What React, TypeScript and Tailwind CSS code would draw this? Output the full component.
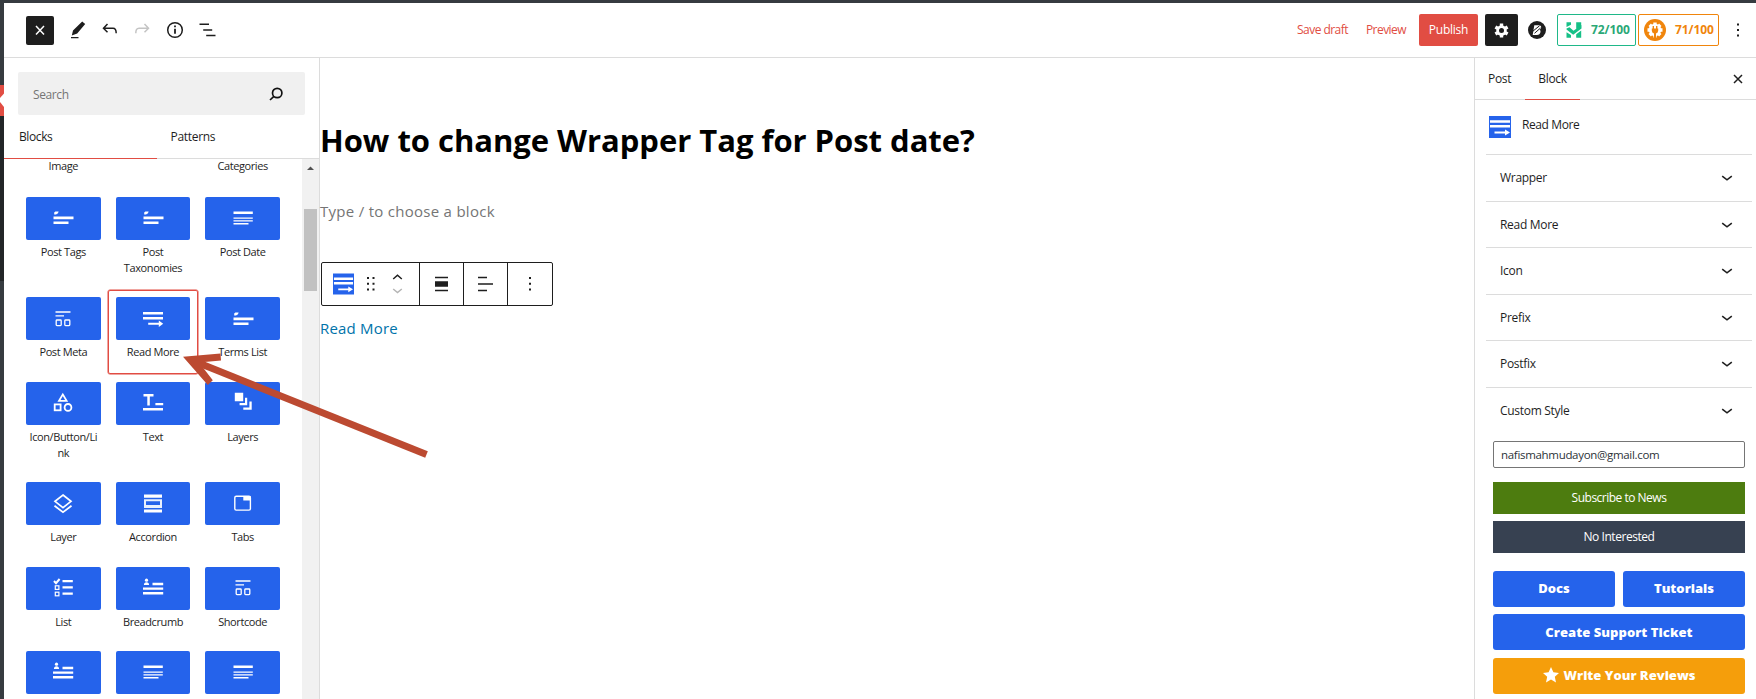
import React from "react";

type IconName =
  | "tags" | "date" | "meta" | "more" | "shapes" | "text" | "layers"
  | "layer" | "accordion" | "tabs" | "list" | "crumb";

function Glyph({ name }: { name: IconName }) {
  switch (name) {
    case "tags":
      return (<><path d="M1.2 3.6V1.400L2.400.4H5.600L5 2.200 3 3.600z" /><path d="M.5 5.600h20v2.600H.5zM.5 10.400h15V13H.5z" /></>);
    case "date":
      return <path d="M.5.6h19.300V3H.5zM.5 6.400h19.300v1.400H.5zM.5 9.200h19.300v1.400H.5zM.5 12h15v1.400H.5z" />;
    case "meta":
      return (<g fill="none" stroke="currentColor" strokeWidth="1.300"><path d="M2.500 0h15M2.500 3.800h8.500" /><rect x="3.200" y="8" width="5" height="5.600" rx=".8" /><rect x="11.800" y="8" width="5" height="5.600" rx=".8" /></g>);
    case "more":
      return (<><path d="M0 0h20v2.600H0zM0 5h20v2.600H0z" /><path d="M5.200 10.800h10.600V8.600l4.400 3.200-4.400 3.100v-2.100H5.200z" /></>);
    case "shapes":
      return (<g fill="none" stroke="currentColor" strokeWidth="1.800"><path d="M9.800-1.600 13.600 4.800H6z" /><rect x="1.700" y="8.400" width="5.900" height="5.900" /><circle cx="15" cy="11.400" r="3.400" /></g>);
    case "text":
      return <path d="M.5-2h10v2.400H6.800V9.400H4.300V.4H.5zM12.400 7h7.800v2.200h-7.800zM0 12h20v2.600H0z" />;
    case "layers":
      return <path d="M1.800-3.200h8.400v8.400H1.800zM12 1.800h2.200V9.200H6.600V7H12zM16.400 5.500h2.300v8.300h-8.400v-2.200h6.100z" />;
    case "layer":
      return (<g fill="none" stroke="currentColor" strokeWidth="1.700"><path d="M10-2 18 4.300 10 10.600 2 4.300zM1.500 8.800 10 15.300l8.500-6.500" /></g>);
    case "accordion":
      return (<><path d="M1-2.500h18V.7H1zM1 12.500h18v3H1z" /><path d="M1 2.200h18v8.800H1zM3 4.300v3.700h14V4.300z" fillRule="evenodd" opacity=".9" /></>);
    case "tabs":
      return (<><rect x="1.800" y="-.7" width="15.600" height="13.800" rx="1.400" fill="none" stroke="currentColor" strokeWidth="1.400" /><path d="M10.300-1h7.300v4.500h-7.300z" /></>);
    case "list":
      return (<><path d="M9.500-1H19.800v2.200H9.500zM9.500 5.200H19.800v2.200H9.500zM9.500 11.500H19.800v2.200H9.500z" /><g fill="none" stroke="currentColor"><path d="M1 0 3 2.200 6.600-2" strokeWidth="2" /><rect x="2.300" y="4.800" width="3.600" height="3.600" strokeWidth="1.200" /><rect x="2.300" y="11.200" width="3.600" height="3.600" strokeWidth="1.200" /></g></>);
    case "crumb":
      return (<><circle cx="3.500" cy="-.8" r="1.600" /><path d="M.9 4Q1 1.200 3.500 1.200T6.100 4zM9.500 1.800h10.700v2.400H9.500zM0 6.600h20.200v2.200H0zM0 11h20.200v2.400H0z" /></>);
  }
}

const blocks: { label: string[]; icon: IconName; active?: boolean }[] = [
  { label: ["Post Tags"], icon: "tags" },
  { label: ["Post", "Taxonomies"], icon: "tags" },
  { label: ["Post Date"], icon: "date" },
  { label: ["Post Meta"], icon: "meta" },
  { label: ["Read More"], icon: "more", active: true },
  { label: ["Terms List"], icon: "tags" },
  { label: ["Icon/Button/Li", "nk"], icon: "shapes" },
  { label: ["Text"], icon: "text" },
  { label: ["Layers"], icon: "layers" },
  { label: ["Layer"], icon: "layer" },
  { label: ["Accordion"], icon: "accordion" },
  { label: ["Tabs"], icon: "tabs" },
  { label: ["List"], icon: "list" },
  { label: ["Breadcrumb"], icon: "crumb" },
  { label: ["Shortcode"], icon: "meta" },
  { label: [], icon: "crumb" },
  { label: [], icon: "date" },
  { label: [], icon: "date" },
];

function BlockTile({ label, icon, active }: { label: string[]; icon: IconName; active?: boolean }) {
  return (
    <div className={`flex flex-col items-center rounded-[2px] border ${active ? "border-[#e14d43] ring-[0.5px] ring-[#e14d43]" : "border-transparent"} px-[6.5px] pt-[6px] pb-[12px]`}>
      <div className="flex h-[43px] w-full shrink-0 items-center justify-center rounded-[2px] bg-[#2563eb] text-white">
        <svg className="h-[14px] w-5 overflow-visible" viewBox="0 0 20 14" fill="currentColor"><Glyph name={icon} /></svg>
      </div>
      <div className="mt-[4px] min-h-[16.4px] text-center text-[11px] leading-[16.4px] tracking-[-0.4px] whitespace-nowrap text-[#1e1e1e]">
        {label.map((l) => <div key={l}>{l}</div>)}
      </div>
    </div>
  );
}

function ReadMoreIcon({ className }: { className: string }) {
  return (
    <svg className={className} viewBox="0 0 22 22">
      <path fill="#2563eb" d="M0 0h22v22H0z" />
      <path fill="#fff" d="M1 4.200h20v2.500H1zM1 9h20v2.600H1zM5.500 15.600H16V13.600l5 3-5 3v-2H5.500z" />
    </svg>
  );
}

function Chevron() {
  return (
    <svg className="h-3 w-3" viewBox="0 0 12 12" fill="none" stroke="#1e1e1e" strokeWidth="1.600"><path d="m1.200 4.200 4.800 3.600 4.800-3.600" /></svg>
  );
}

function Header() {
  return (
    <header className="flex h-[55px] shrink-0 items-center border-b border-[#dcdcdc] pl-[22px]">
      <button className="flex h-[29px] w-7 items-center justify-center rounded-[2px] bg-[#1e1e1e]">
        <svg className="h-3 w-3" viewBox="0 0 12 12" stroke="#fff" strokeWidth="1.500"><path d="m2 2 8 8.500M10 2l-8 8.500" /></svg>
      </button>
      <svg className="ml-4 h-[18px] w-[17px]" viewBox="0 0 17 18" fill="#1e1e1e"><path d="M12.200.6 15.200 3 7.200 12.400 1.800 14.400 3 9.500zM1 16h7.500v1.300H1z" /></svg>
      <svg className="ml-[15px] h-4 w-4" viewBox="0 0 16 16" fill="none" stroke="#1e1e1e" strokeWidth="1.500"><path d="M5.500 2 1.500 6.200l4 4M1.500 6.200H11q3.200 0 3.200 5" /></svg>
      <svg className="ml-4 h-4 w-4" viewBox="0 0 16 16" fill="none" stroke="#c4c4c4" strokeWidth="1.500"><path d="m10.500 2 4 4.200-4 4M14.500 6.200H5q-3.200 0-3.200 5" /></svg>
      <svg className="ml-4 h-[18px] w-[18px]" viewBox="0 0 18 18" fill="none" stroke="#1e1e1e"><circle cx="9" cy="9" r="7.300" strokeWidth="1.500" /><path d="M9 7.800v5M9 4.400v1.900" strokeWidth="1.800" /></svg>
      <svg className="ml-[15px] h-4 w-[17px]" viewBox="0 0 17 16" fill="none" stroke="#1e1e1e" strokeWidth="1.500"><path d="M.5 2.300h9.500M4.200 8h9M7.200 13.600h9.300" /></svg>

      <div className="ml-auto flex items-center text-[12px] text-[#e14d43]">
        <span className="tracking-[-0.55px]">Save draft</span>
        <span className="ml-[18px] tracking-[-0.55px]">Preview</span>
        <button className="ml-[13px] flex h-8 w-[59px] items-center justify-center rounded-[2px] bg-[#e14d43] tracking-[-0.25px] text-white">Publish</button>
        <button className="ml-[7px] flex h-8 w-[33px] items-center justify-center rounded-[2px] bg-[#1e1e1e]">
          <svg className="h-[15px] w-[15px]" viewBox="0 0 15 15">
            <g stroke="#fff" strokeWidth="3.400"><path d="M7.500.5v14M1.400 4l12.200 7M1.400 11l12.200-7" /></g>
            <circle cx="7.500" cy="7.500" r="5.200" fill="#fff" /><circle cx="7.500" cy="7.500" r="2.500" fill="#1e1e1e" />
          </svg>
        </button>
        <svg className="ml-[10px] h-[18px] w-[18px]" viewBox="0 0 18 18">
          <circle cx="9" cy="9" r="9" fill="#1e1e1e" />
          <path fill="#fff" d="M6.300 4.200h4.500q2.800 0 2.300 2.600-.3 1.400-1.600 2 1.300.6 1 2.200-.5 2.900-3.600 2.900H4.700z" />
          <path fill="none" stroke="#1e1e1e" strokeWidth="1" d="M4.500 10.500 11.500 4.800M6.500 12.300 12.500 7" />
        </svg>
        <div className="ml-[11px] flex h-8 w-[79px] items-center rounded-[2px] border border-[#1fb889] pl-2 text-[#2aa876]">
          <svg className="h-4 w-4" viewBox="0 0 16 16" fill="#16c087"><path d="M.5.3H5v2.400L.5 5zM10.200.3h5v4.600l-5 3.200zM.5 6.600l3-1.400 4 3.600L15.500 3v3.600L7.200 12.800.5 7.600zM.5 10.300 5 13v2.800H.5zM10.200 12.200l5-3.600v7.200h-5z" /></svg>
          <span className="ml-[9px] text-[12px] font-bold tracking-[-0.1px]">72/100</span>
        </div>
        <div className="ml-[2px] flex h-8 w-[81px] items-center rounded-[2px] border border-[#f0850c] pl-[5px] text-[#f0850c]">
          <svg className="h-[22px] w-[22px]" viewBox="0 0 22 22">
            <circle cx="11" cy="11" r="11" fill="#f0850c" />
            <g stroke="#fff" strokeWidth="3.400"><path d="M11 3.500v3M11 15.500v3M3.500 11h3M15.500 11h3M5.700 5.700l3 3M13.300 13.300l3 3M16.300 5.700l-3 3M8.700 13.300l-3 3" /></g>
            <circle cx="11" cy="11" r="6.200" fill="#fff" />
            <path fill="#f0850c" d="M8.600 7h1.400v2.500h2V7h1.400v2.500h.8v2q0 2.400-2.200 2.900V19h-2v-4.600q-2.200-.5-2.200-2.900v-2h.8z" />
          </svg>
          <span className="ml-[9px] text-[12px] font-bold tracking-[-0.1px]">71/100</span>
        </div>
        <svg className="ml-[17px] mr-[16px] h-4 w-1" viewBox="0 0 4 16" fill="#1e1e1e"><path d="M1 1.500h2v2H1zM1 7h2v2H1zM1 12.500h2v2H1z" /></svg>
      </div>
    </header>
  );
}

function Inserter() {
  return (
    <aside className="flex w-[316px] shrink-0 flex-col border-r border-[#dcdcdc]">
      <div className="mx-[14px] mt-[14px] flex h-[43px] shrink-0 items-center justify-between rounded-[2px] bg-[#f0f0f0] pr-[22px] pl-[15px]">
        <span className="pt-[2px] text-[12px] tracking-[-0.4px] text-[#757575]">Search</span>
        <svg className="h-[14px] w-[14px]" viewBox="0 0 14 14" fill="none" stroke="#111" strokeWidth="1.700"><circle cx="8.200" cy="6" r="4.700" /><path d="M4.900 9.300 1 13" /></svg>
      </div>
      <div className="grid h-[44px] shrink-0 grid-cols-2 border-b border-[#dcdcdc] text-[12px] text-[#1e1e1e]">
        <div className="-mb-px flex w-[153px] items-center border-b-[1.5px] border-[#e14d43] pl-[15px] tracking-[-0.4px]">Blocks</div>
        <div className="flex items-center pl-[9px] tracking-[-0.3px]">Patterns</div>
      </div>
      <div className="flex min-h-0 flex-1 overflow-hidden">
        <div className="w-[298px] shrink-0 pl-[14.5px]">
          <div className="grid h-[30.5px] w-[269px] grid-cols-3 text-center text-[11px] leading-[14px] tracking-[-0.4px] text-[#1e1e1e]">
            <span>Image</span><span /><span>Categories</span>
          </div>
          <div className="grid w-[269px] grid-cols-3 gap-y-[0.9px]">
            {blocks.map((b, i) => <BlockTile key={i} {...b} />)}
          </div>
        </div>
        <div className="-ml-[0.5px] flex w-[17.5px] shrink-0 flex-col items-center bg-[#f1f1f1]">
          <svg className="mt-[7px] h-[5px] w-[7px]" viewBox="0 0 7 5" fill="#505050"><path d="M0 4 3.500.5 7 4z" /></svg>
          <div className="mt-[38px] h-[82px] w-[13px] bg-[#c1c1c1]" />
        </div>
      </div>
    </aside>
  );
}

function BlockToolbar() {
  return (
    <div className="mt-[39px] ml-px flex h-[44px] w-[232px] rounded-[2px] border border-[#1e1e1e] *:flex *:items-center">
      <div className="w-[98px] border-r border-[#1e1e1e] pl-[11px]">
        <ReadMoreIcon className="h-[22px] w-[21px]" />
        <svg className="ml-[13px] h-[14px] w-2" viewBox="0 0 8 14" fill="#1e1e1e"><path d="M0 0h2v2H0zM5.500 0h2v2h-2zM0 5.700h2v2H0zM5.500 5.700h2v2h-2zM0 11.500h2v2H0zM5.500 11.500h2v2h-2z" /></svg>
        <svg className="ml-[17px] h-5 w-[11px]" viewBox="0 0 11 20" fill="none" strokeWidth="1.500"><path d="M1.200 5 5.500 1.300 9.800 5" stroke="#1e1e1e" /><path d="M1.200 15 5.500 18.600 9.800 15" stroke="#b5b5b5" /></svg>
      </div>
      <div className="w-[44px] justify-center border-r border-[#1e1e1e]">
        <svg className="h-4 w-[13px]" viewBox="0 0 13 16" fill="#1e1e1e"><path d="M0 .8h13v1.500H0zM0 5.200h13v5.500H0zM0 13.700h13v1.500H0z" /></svg>
      </div>
      <div className="w-[44px] justify-center border-r border-[#1e1e1e]">
        <svg className="h-4 w-[15px]" viewBox="0 0 15 16" fill="#1e1e1e"><path d="M0 .8h9v1.500H0zM0 7.200h15v1.600H0zM0 13.700h9v1.500H0z" /></svg>
      </div>
      <div className="flex-1 justify-center">
        <svg className="h-[14px] w-[2px]" viewBox="0 0 2 14" fill="#1e1e1e"><path d="M0 0h2v2H0zM0 5.700h2v2H0zM0 11.500h2v2H0z" /></svg>
      </div>
    </div>
  );
}

function Canvas() {
  return (
    <main className="flex min-w-0 flex-1 flex-col pt-[59px]">
      <h1 className="h-[46px] text-[31px] leading-[46px] font-bold tracking-[-0.03px] whitespace-nowrap text-black">How to change Wrapper Tag for Post date?</h1>
      <p className="mt-[36px] h-6 text-[15px] leading-6 tracking-[0.28px] text-[#757575]">Type / to choose a block</p>
      <BlockToolbar />
      <a className="mt-[10px] text-[15px] leading-6 tracking-[0.2px] text-[#0073aa]">Read More</a>
    </main>
  );
}

function Inspector() {
  return (
    <aside className="flex w-[282px] shrink-0 flex-col border-l border-[#dcdcdc] text-[12px] text-[#1e1e1e]">
      <div className="flex h-[42px] shrink-0 items-stretch border-b border-[#dcdcdc] pl-[13px]">
        <div className="flex items-center tracking-[-0.3px]">Post</div>
        <div className="-mb-px ml-auto mr-[152px] flex w-[55px] items-center justify-center border-b-[1.5px] border-[#e14d43] tracking-[-0.35px]">Block</div>
        <svg className="mr-[12px] h-3 w-3 self-center" viewBox="0 0 12 12" stroke="#1e1e1e" strokeWidth="1.500"><path d="m2 2 8 8M10 2l-8 8" /></svg>
      </div>
      <div className="flex h-[54px] items-start pt-[16px] pl-[14px]">
        <ReadMoreIcon className="h-[22px] w-[22px]" />
        <span className="ml-[11px] leading-[18px] tracking-[-0.4px]">Read More</span>
      </div>
      <div className="mr-1 ml-[11px]">
        {["Wrapper", "Read More", "Icon", "Prefix", "Postfix", "Custom Style"].map((l) => (
          <div key={l} className="flex h-[46.5px] items-center justify-between border-t border-[#dcdcdc] pt-px pr-[19px] pl-[14px] tracking-[-0.3px]">
            <span>{l}</span><Chevron />
          </div>
        ))}
      </div>
      <div className="mt-[8px] mr-[11px] ml-[18px] flex flex-col text-white">
        <div className="flex h-[27px] items-center rounded-[2px] border border-[#757575] pl-[7px] text-[11.5px] tracking-[-0.31px] text-[#2c3338]">nafismahmudayon@gmail.com</div>
        <button className="mt-[14px] h-8 bg-[#4d7c0f] tracking-[-0.5px]">Subscribe to News</button>
        <button className="mt-[7px] h-8 bg-[#374151] tracking-[-0.45px]">No Interested</button>
        <div className="mt-[18px] grid grid-cols-2 gap-2 text-[13px] font-extrabold">
          <button className="h-9 rounded-[3px] bg-[#2563eb]">Docs</button>
          <button className="h-9 rounded-[3px] bg-[#2563eb]">Tutorials</button>
        </div>
        <button className="mt-[7px] h-9 rounded-[3px] bg-[#2563eb] pt-[2px] text-[13px] font-extrabold tracking-[0.05px]">Create Support Ticket</button>
        <button className="mt-[8px] flex h-9 items-center justify-center rounded-[3px] bg-[#f59e0b] text-[13px] font-extrabold">
          <svg className="mr-[5px] mb-[3px] h-4 w-4" viewBox="0 0 16 16" fill="#fff"><path d="m8 0 2.400 5.200 5.600.7-4.200 3.800 1.200 5.800L8 12.600l-5 2.900 1.200-5.800L0 5.900l5.600-.7z" /></svg>
          Write Your Reviews
        </button>
      </div>
    </aside>
  );
}

export default function App() {
  return (
    <div className="relative flex h-[699px] w-[1756px] flex-col overflow-hidden bg-white font-['Open_Sans','Noto_Sans',sans-serif]">
      <div className="h-[3px] shrink-0 bg-[#363b40]" />
      <div className="flex min-h-0 flex-1">
        <div className="flex w-1 shrink-0 flex-col bg-[#363b40]">
          <div className="h-[82px]" />
          <svg className="h-[31px] w-1" viewBox="0 0 4 31"><path fill="#e14d43" d="M0 0h4v31H0z" /><path fill="#fff" d="M4 8.500 0 13v4l4 5z" /></svg>
          <div className="h-[165px] bg-[#222527]" />
        </div>
        <div className="flex min-w-0 flex-1 flex-col">
          <Header />
          <div className="flex min-h-0 flex-1">
            <Inserter />
            <Canvas />
            <Inspector />
          </div>
        </div>
      </div>
      <svg className="pointer-events-none absolute top-[340px] left-[170px] h-[130px] w-[270px]" viewBox="170 340 270 130">
        <path d="M190 359.500 426.500 454.500" stroke="#bc4a31" strokeWidth="7" />
        <path d="M183 356.700 220.500 353.500l.5 7-22 2 13.800 17.700-5 4.800z" fill="#bc4a31" />
      </svg>
    </div>
  );
}
